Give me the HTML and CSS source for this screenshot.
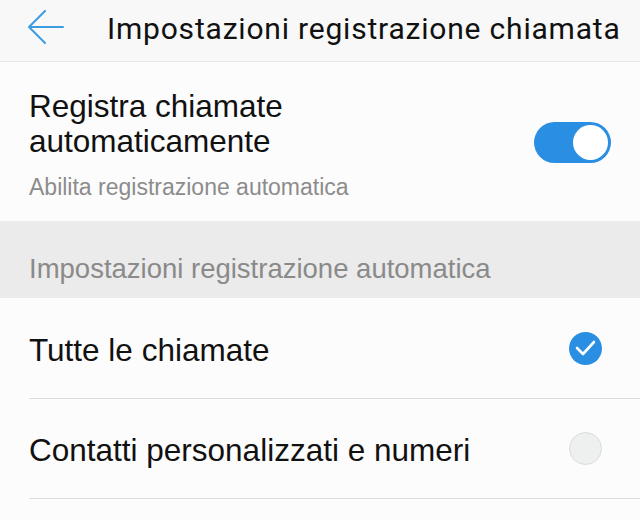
FILE: index.html
```html
<!DOCTYPE html>
<html lang="it">

<head>
    <meta charset="UTF-8">
    <meta name="viewport" content="width=device-width, initial-scale=1.0">
    <title>Impostazioni registrazione chiamata</title>
    <link rel="stylesheet" href="styles.css">
</head>

<body>
    <header class="topbar">
        <button class="back" aria-label="Indietro">
            <svg width="36" height="34" viewBox="0 0 36 34">
                <path d="M17 1 L1 17 L17 33 M1 17 L35 17" fill="none" stroke="#3d9be0" stroke-width="2" stroke-linecap="round" stroke-linejoin="round" />
            </svg>
        </button>
        <h1>Impostazioni registrazione chiamata</h1>
    </header>

    <main>
        <div class="setting">
            <div class="setting-main">
                <div class="setting-title">Registra chiamate<br>automaticamente</div>
                <span class="toggle on"><span class="knob"></span></span>
            </div>
            <div class="setting-sub">Abilita registrazione automatica</div>
        </div>

        <div class="section">Impostazioni registrazione automatica</div>

        <ul class="options">
            <li>
                <span>Tutte le chiamate</span>
                <span class="radio checked">
                    <svg width="21" height="16" viewBox="0 0 21 16">
                        <path d="M2 8 L8 14 L19 2" fill="none" stroke="#fff" stroke-width="2.6" stroke-linecap="round" stroke-linejoin="round" />
                    </svg>
                </span>
            </li>
            <li>
                <span>Contatti personalizzati e numeri</span>
                <span class="radio"></span>
            </li>
        </ul>
    </main>
</body>

</html>
```

FILE: styles.css
```css
body {
    margin: 0;
    padding: 0;
    font-family: "Liberation Sans", Arial, sans-serif;
    background-color: #fcfcfc;
    color: #111;
}

.topbar {
    display: flex;
    align-items: center;
    height: 61px;
    background-color: #f8f8f8;
    border-bottom: 1px solid #e6e6e6;
}

.back {
    border: none;
    background: none;
    padding: 0;
    margin: 0 0 8px 28px;
    width: 36px;
    height: 34px;
    cursor: pointer;
}

.back svg {
    display: block;
}

.topbar h1 {
    margin: 0 0 5px 43px;
    font-family: Roboto, "Liberation Sans", sans-serif;
    font-size: 30px;
    font-weight: normal;
    letter-spacing: 0.8px;
    color: #111;
    white-space: nowrap;
}

.setting {
    padding: 27px 29px 20px;
}

.setting-main {
    display: flex;
    align-items: flex-start;
    justify-content: space-between;
}

.setting-title {
    font-size: 31.5px;
    line-height: 35px;
}

.setting-sub {
    margin-top: 11px;
    font-size: 23px;
    color: #8c8c8c;
}

.toggle {
    display: flex;
    align-items: center;
    justify-content: flex-end;
    width: 77px;
    height: 41px;
    margin-top: 33px;
    border-radius: 21px;
    background-color: #2a8fe2;
    box-sizing: border-box;
    padding: 3px;
}

.knob {
    width: 35px;
    height: 35px;
    border-radius: 50%;
    background-color: #fff;
}

.section {
    background-color: #ebebeb;
    height: 77px;
    box-sizing: border-box;
    padding: 32px 29px 0;
    font-size: 27.5px;
    color: #8a8a8a;
}

.options {
    list-style: none;
    margin: 0;
    padding: 0 0 0 29px;
}

.options li {
    display: flex;
    align-items: center;
    justify-content: space-between;
    height: 99px;
    padding-right: 38px;
    border-bottom: 1px solid #dcdcdc;
    font-size: 31.5px;
}

.options li:first-child {
    height: 100px;
}

.options li > span:first-child {
    padding-top: 4px;
}

.radio {
    display: flex;
    align-items: center;
    justify-content: center;
    width: 33px;
    height: 33px;
    border-radius: 50%;
    box-sizing: border-box;
    background-color: #eef0f0;
    border: 1px solid #dadcdc;
}

.radio.checked {
    background-color: #2a8fe2;
    border: none;
}
```
